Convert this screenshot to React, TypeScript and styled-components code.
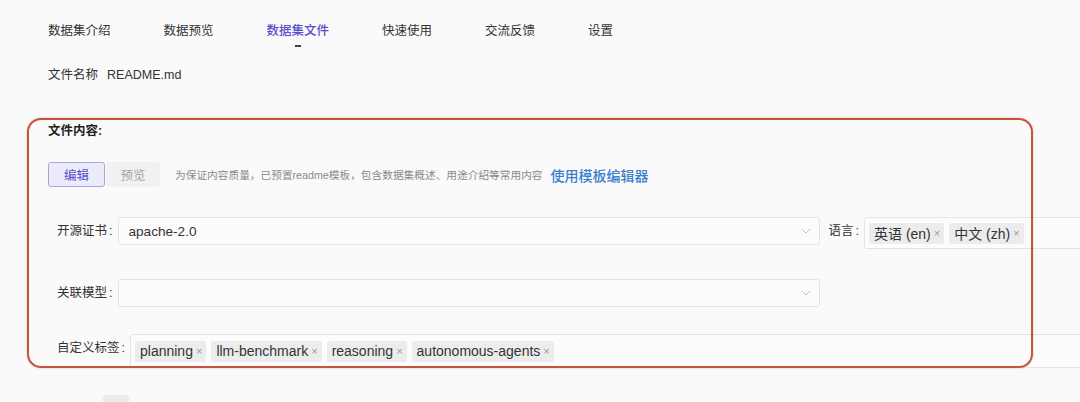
import styled, { createGlobalStyle } from 'styled-components';

const GlobalStyle = createGlobalStyle`
	html, body {
		margin: 0;
		padding: 0;
		background: #fafafa;
		overflow: hidden;
	}
	body {
		width: 1080px;
		height: 402px;
		font-family: 'Liberation Sans', 'Noto Sans CJK SC', sans-serif;
		color: #333;
	}
`;

const tabs = ['数据集介绍', '数据预览', '数据集文件', '快速使用', '交流反馈', '设置'];
const langs = ['英语 (en)', '中文 (zh)'];
const labels = ['planning', 'llm-benchmark', 'reasoning', 'autonomous-agents'];

const Chevron = () => (
	<svg width='10' height='6' viewBox='0 0 10 6' fill='none'>
		<path d='M1 1l4 4 4-4' stroke='#bdbdbd' strokeWidth='1' />
	</svg>
);

const App = () => {
	return (
		<Page>
			<GlobalStyle />
			<TabBar>
				{tabs.map((t) => (
					<Tab key={t} $active={t === '数据集文件'}>
						<span>{t}</span>
						<Indicator $active={t === '数据集文件'} />
					</Tab>
				))}
			</TabBar>

			<FileName>
				<span>文件名称</span>
				<span>README.md</span>
			</FileName>

			<Section>
				<Annotation />
				<SectionTitle>文件内容:</SectionTitle>

				<EditorBar>
					<Switcher>
						<SwitchButton $active>编辑</SwitchButton>
						<SwitchButton>预览</SwitchButton>
					</Switcher>
					<Hint>为保证内容质量，已预置readme模板，包含数据集概述、用途介绍等常用内容</Hint>
					<TemplateLink>使用模板编辑器</TemplateLink>
				</EditorBar>

				<FormRow $top={30}>
					<Label>开源证书<Colon>:</Colon></Label>
					<Select>
						<span>apache-2.0</span>
						<Chevron />
					</Select>
					<Label $left={9}>语言<Colon>:</Colon></Label>
					<TagField $width={240} $height={32}>
						{langs.map((l) => (
							<Tag key={l}>
								{l}
								<Close>×</Close>
							</Tag>
						))}
					</TagField>
				</FormRow>

				<FormRow $top={30}>
					<Label>关联模型<Colon>:</Colon></Label>
					<Select>
						<span />
						<Chevron />
					</Select>
				</FormRow>

				<FormRow $top={27}>
					<Label>自定义标签<Colon>:</Colon></Label>
					<TagField $width={980} $height={34}>
						{labels.map((l) => (
							<Tag key={l}>
								{l}
								<Close>×</Close>
							</Tag>
						))}
					</TagField>
				</FormRow>
			</Section>

			<NextRow>
				<NextMark />
				<NextBox />
			</NextRow>
		</Page>
	);
};

const Page = styled.div`
	padding: 22px 0 0 48px;
	font-size: 12.5px;
`;

const TabBar = styled.div`
	display: flex;
	gap: 53px;
`;

const Tab = styled.div<{ $active?: boolean }>`
	display: flex;
	flex-direction: column;
	align-items: center;
	line-height: 18px;
	color: ${(p) => (p.$active ? '#5a4fcf' : '#333')};
	font-weight: ${(p) => (p.$active ? 500 : 400)};
`;

const Indicator = styled.div<{ $active?: boolean }>`
	width: 6px;
	height: 2px;
	margin-top: 5px;
	background: ${(p) => (p.$active ? '#444' : 'transparent')};
`;

const FileName = styled.div`
	display: flex;
	gap: 9px;
	margin-top: 19px;
	line-height: 18px;
	color: #333;
`;

const Section = styled.div`
	position: relative;
	margin-top: 38px;
`;

const Annotation = styled.div`
	position: absolute;
	left: -21px;
	top: -4px;
	width: 1006px;
	height: 250px;
	box-sizing: border-box;
	border: 2px solid #c4543d;
	border-radius: 14px;
	box-shadow: 0 0 2px rgba(196, 84, 61, 0.45);
	pointer-events: none;
	z-index: 1;
`;

const SectionTitle = styled.div`
	font-weight: 700;
	line-height: 18px;
	color: #222;
`;

const EditorBar = styled.div`
	display: flex;
	align-items: center;
	margin-top: 22px;
`;

const Switcher = styled.div`
	display: flex;
	gap: 1px;
`;

const SwitchButton = styled.div<{ $active?: boolean }>`
	box-sizing: border-box;
	width: ${(p) => (p.$active ? '57px' : '54px')};
	height: 25px;
	display: flex;
	align-items: center;
	justify-content: center;
	border-radius: 3px;
	font-size: 12.5px;
	border: 1px solid ${(p) => (p.$active ? '#a9a4dc' : 'transparent')};
	background: ${(p) => (p.$active ? '#ecebfa' : '#f1f1f3')};
	color: ${(p) => (p.$active ? '#5a4fcf' : '#a3a3a3')};
`;

const Hint = styled.span`
	margin-left: 15px;
	font-size: 10.7px;
	color: #8a8a8a;
`;

const TemplateLink = styled.span`
	margin-left: 8px;
	font-size: 14px;
	font-weight: 500;
	color: #3a7fd0;
`;

const FormRow = styled.div<{ $top: number }>`
	display: flex;
	align-items: flex-start;
	margin-top: ${(p) => p.$top}px;
	padding-left: 9px;
`;

const Label = styled.div<{ $left?: number }>`
	flex-shrink: 0;
	line-height: 28px;
	margin-left: ${(p) => p.$left ?? 0}px;
	margin-right: 5px;
	color: #333;
	white-space: nowrap;
`;

const Colon = styled.span`
	margin-left: 2px;
`;

const Select = styled.div`
	box-sizing: border-box;
	flex-shrink: 0;
	width: 702px;
	height: 28px;
	display: flex;
	align-items: center;
	justify-content: space-between;
	padding: 0 8px 0 10px;
	background: #fcfcfc;
	border: 1px solid #e4e4e4;
	border-radius: 3px;
	font-size: 13.6px;
	color: #333;
`;

const TagField = styled.div<{ $width: number; $height: number }>`
	box-sizing: border-box;
	flex-shrink: 0;
	width: ${(p) => p.$width}px;
	height: ${(p) => p.$height}px;
	display: flex;
	align-items: center;
	gap: 5px;
	padding: 0 4px;
	background: #fcfcfc;
	border: 1px solid #e4e4e4;
	border-radius: 3px;
`;

const Tag = styled.span`
	display: inline-flex;
	align-items: center;
	height: 21px;
	padding: 0 4px 0 5px;
	background: #ececec;
	border-radius: 2px;
	font-size: 14px;
	color: #333;
	white-space: nowrap;
`;

const Close = styled.span`
	margin-left: 3px;
	font-size: 11px;
	color: #9a9a9a;
`;

const NextRow = styled.div`
	display: flex;
	align-items: flex-end;
	gap: 25px;
	margin-top: 27px;
	padding-left: 27px;
`;

const NextMark = styled.div`
	width: 3px;
	height: 2px;
	background: #777;
`;

const NextBox = styled.div`
	width: 26px;
	height: 12px;
	background: #ececec;
	border-radius: 2px;
`;

export default App;
